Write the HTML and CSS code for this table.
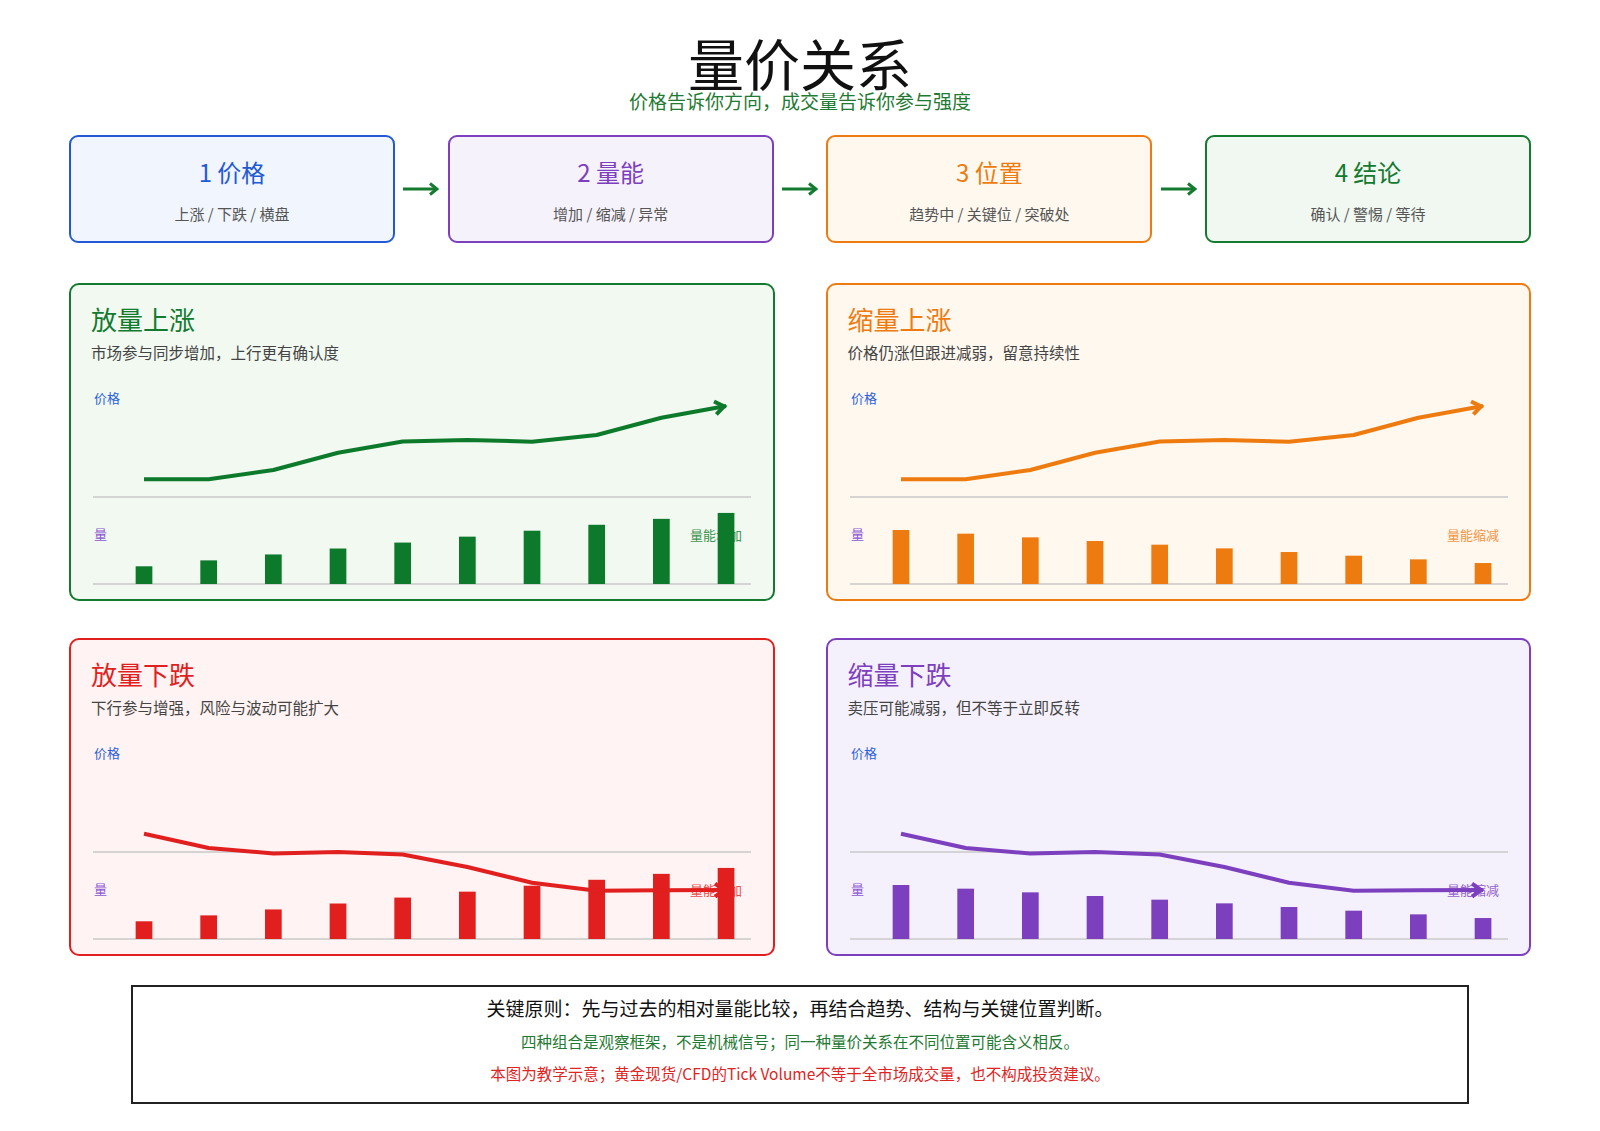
FILE: index.html
```html
<!DOCTYPE html>
<html lang="zh-CN">
<head>
<meta charset="utf-8">
<title>量价关系</title>
<link rel="stylesheet" href="styles.css">
</head>
<body>
<div class="page">
  <header class="hdr">
    <h1 class="title">量价关系</h1>
    <p class="subtitle">价格告诉你方向，成交量告诉你参与强度</p>
  </header>

  <div class="steps">
    <div class="step step-blue">
      <div class="step-title">1 价格</div>
      <div class="step-sub">上涨 / 下跌 / 横盘</div>
    </div>
    <div class="step-arrow"><svg class="arrow-svg" viewBox="0 0 36 14"><line x1="0" y1="7" x2="33" y2="7"/><polyline points="27,1.5 34,7 27,12.5"/></svg></div>
    <div class="step step-purple">
      <div class="step-title">2 量能</div>
      <div class="step-sub">增加 / 缩减 / 异常</div>
    </div>
    <div class="step-arrow"><svg class="arrow-svg" viewBox="0 0 36 14"><line x1="0" y1="7" x2="33" y2="7"/><polyline points="27,1.5 34,7 27,12.5"/></svg></div>
    <div class="step step-orange">
      <div class="step-title">3 位置</div>
      <div class="step-sub">趋势中 / 关键位 / 突破处</div>
    </div>
    <div class="step-arrow"><svg class="arrow-svg" viewBox="0 0 36 14"><line x1="0" y1="7" x2="33" y2="7"/><polyline points="27,1.5 34,7 27,12.5"/></svg></div>
    <div class="step step-green">
      <div class="step-title">4 结论</div>
      <div class="step-sub">确认 / 警惕 / 等待</div>
    </div>
  </div>

  <div class="panels">
    <section class="panel panel-green">
      <h2 class="panel-title">放量上涨</h2>
      <p class="panel-sub">市场参与同步增加，上行更有确认度</p>
      <svg class="chart" viewBox="0 0 661 206">
        <defs><marker id="ah-green" markerUnits="userSpaceOnUse" markerWidth="20" markerHeight="20" viewBox="-16 -10 20 20" refX="0" refY="0" orient="auto"><path class="ah" d="M-11,-6.5 L-2,0 L-11,6.5"/></marker></defs>
        <line class="axis" x1="2" y1="117" x2="660" y2="117"/>
        <line class="axis" x1="2" y1="204" x2="660" y2="204"/>
        <text class="lbl lbl-price" x="3" y="17">价格</text>
        <text class="lbl lbl-vol" x="3" y="153">量</text>
        <text class="lbl lbl-tag" x="599" y="154">量能增加</text>
        <g class="bars">
          <rect x="44.65" y="186.3" width="16.7" height="17.7"/>
          <rect x="109.32" y="180.37" width="16.7" height="23.63"/>
          <rect x="173.99" y="174.44" width="16.7" height="29.56"/>
          <rect x="238.66" y="168.51" width="16.7" height="35.49"/>
          <rect x="303.33" y="162.58" width="16.7" height="41.42"/>
          <rect x="368" y="156.65" width="16.7" height="47.35"/>
          <rect x="432.67" y="150.72" width="16.7" height="53.28"/>
          <rect x="497.34" y="144.79" width="16.7" height="59.21"/>
          <rect x="562.01" y="138.86" width="16.7" height="65.14"/>
          <rect x="626.68" y="132.93" width="16.7" height="71.07"/>
        </g>
        <polyline class="price" marker-end="url(#ah-green)" points="53,99.3 117.67,99.3 182.34,90 247.01,72.7 311.68,61.5 376.35,60 441.02,61.7 505.69,55 570.36,37.7 635.03,26"/>
      </svg>
    </section>

    <section class="panel panel-orange">
      <h2 class="panel-title">缩量上涨</h2>
      <p class="panel-sub">价格仍涨但跟进减弱，留意持续性</p>
      <svg class="chart" viewBox="0 0 661 206">
        <defs><marker id="ah-orange" markerUnits="userSpaceOnUse" markerWidth="20" markerHeight="20" viewBox="-16 -10 20 20" refX="0" refY="0" orient="auto"><path class="ah" d="M-11,-6.5 L-2,0 L-11,6.5"/></marker></defs>
        <line class="axis" x1="2" y1="117" x2="660" y2="117"/>
        <line class="axis" x1="2" y1="204" x2="660" y2="204"/>
        <text class="lbl lbl-price" x="3" y="17">价格</text>
        <text class="lbl lbl-vol" x="3" y="153">量</text>
        <text class="lbl lbl-tag" x="599" y="154">量能缩减</text>
        <g class="bars">
          <rect x="44.65" y="150" width="16.7" height="54"/>
          <rect x="109.32" y="153.67" width="16.7" height="50.33"/>
          <rect x="173.99" y="157.34" width="16.7" height="46.66"/>
          <rect x="238.66" y="161.01" width="16.7" height="42.99"/>
          <rect x="303.33" y="164.68" width="16.7" height="39.32"/>
          <rect x="368" y="168.35" width="16.7" height="35.65"/>
          <rect x="432.67" y="172.02" width="16.7" height="31.98"/>
          <rect x="497.34" y="175.69" width="16.7" height="28.31"/>
          <rect x="562.01" y="179.36" width="16.7" height="24.64"/>
          <rect x="626.68" y="183.03" width="16.7" height="20.97"/>
        </g>
        <polyline class="price" marker-end="url(#ah-orange)" points="53,99.3 117.67,99.3 182.34,90 247.01,72.7 311.68,61.5 376.35,60 441.02,61.7 505.69,55 570.36,37.7 635.03,26"/>
      </svg>
    </section>

    <section class="panel panel-red">
      <h2 class="panel-title">放量下跌</h2>
      <p class="panel-sub">下行参与增强，风险与波动可能扩大</p>
      <svg class="chart" viewBox="0 0 661 206">
        <defs><marker id="ah-red" markerUnits="userSpaceOnUse" markerWidth="20" markerHeight="20" viewBox="-16 -10 20 20" refX="0" refY="0" orient="auto"><path class="ah" d="M-11,-6.5 L-2,0 L-11,6.5"/></marker></defs>
        <line class="axis" x1="2" y1="117" x2="660" y2="117"/>
        <line class="axis" x1="2" y1="204" x2="660" y2="204"/>
        <text class="lbl lbl-price" x="3" y="17">价格</text>
        <text class="lbl lbl-vol" x="3" y="153">量</text>
        <text class="lbl lbl-tag" x="599" y="154">量能增加</text>
        <g class="bars">
          <rect x="44.65" y="186.3" width="16.7" height="17.7"/>
          <rect x="109.32" y="180.37" width="16.7" height="23.63"/>
          <rect x="173.99" y="174.44" width="16.7" height="29.56"/>
          <rect x="238.66" y="168.51" width="16.7" height="35.49"/>
          <rect x="303.33" y="162.58" width="16.7" height="41.42"/>
          <rect x="368" y="156.65" width="16.7" height="47.35"/>
          <rect x="432.67" y="150.72" width="16.7" height="53.28"/>
          <rect x="497.34" y="144.79" width="16.7" height="59.21"/>
          <rect x="562.01" y="138.86" width="16.7" height="65.14"/>
          <rect x="626.68" y="132.93" width="16.7" height="71.07"/>
        </g>
        <polyline class="price" marker-end="url(#ah-red)" points="53,98.7 117.67,113 182.34,118.5 247.01,117 311.68,119.5 376.35,132 441.02,147.8 505.69,155.7 570.36,155.2 635.03,155"/>
      </svg>
    </section>

    <section class="panel panel-purple">
      <h2 class="panel-title">缩量下跌</h2>
      <p class="panel-sub">卖压可能减弱，但不等于立即反转</p>
      <svg class="chart" viewBox="0 0 661 206">
        <defs><marker id="ah-purple" markerUnits="userSpaceOnUse" markerWidth="20" markerHeight="20" viewBox="-16 -10 20 20" refX="0" refY="0" orient="auto"><path class="ah" d="M-11,-6.5 L-2,0 L-11,6.5"/></marker></defs>
        <line class="axis" x1="2" y1="117" x2="660" y2="117"/>
        <line class="axis" x1="2" y1="204" x2="660" y2="204"/>
        <text class="lbl lbl-price" x="3" y="17">价格</text>
        <text class="lbl lbl-vol" x="3" y="153">量</text>
        <text class="lbl lbl-tag" x="599" y="154">量能缩减</text>
        <g class="bars">
          <rect x="44.65" y="150" width="16.7" height="54"/>
          <rect x="109.32" y="153.67" width="16.7" height="50.33"/>
          <rect x="173.99" y="157.34" width="16.7" height="46.66"/>
          <rect x="238.66" y="161.01" width="16.7" height="42.99"/>
          <rect x="303.33" y="164.68" width="16.7" height="39.32"/>
          <rect x="368" y="168.35" width="16.7" height="35.65"/>
          <rect x="432.67" y="172.02" width="16.7" height="31.98"/>
          <rect x="497.34" y="175.69" width="16.7" height="28.31"/>
          <rect x="562.01" y="179.36" width="16.7" height="24.64"/>
          <rect x="626.68" y="183.03" width="16.7" height="20.97"/>
        </g>
        <polyline class="price" marker-end="url(#ah-purple)" points="53,98.7 117.67,113 182.34,118.5 247.01,117 311.68,119.5 376.35,132 441.02,147.8 505.69,155.7 570.36,155.2 635.03,155"/>
      </svg>
    </section>
  </div>

  <div class="note">
    <div class="note-main">关键原则：先与过去的相对量能比较，再结合趋势、结构与关键位置判断。</div>
    <div class="note-green">四种组合是观察框架，不是机械信号；同一种量价关系在不同位置可能含义相反。</div>
    <div class="note-red">本图为教学示意；黄金现货/CFD的Tick Volume不等于全市场成交量，也不构成投资建议。</div>
  </div>
</div>
</body>
</html>
```

FILE: styles.css
```css
body {
  margin: 0;
  background: #ffffff;
  font-family: "Noto Sans CJK SC", "Noto Sans", sans-serif;
  color: #111;
}

.page {
  width: 1462px;
  margin: 0 auto;
  padding-top: 36px;
}

/* header */
.hdr {
  text-align: center;
}
.title {
  margin: 0;
  font-size: 56px;
  line-height: 52px;
  font-weight: 400;
  color: #111;
}
.subtitle {
  margin: 2px 0 0;
  font-size: 19px;
  line-height: 21px;
  color: #1f7a33;
}

/* steps */
.steps {
  display: flex;
  align-items: center;
  margin-top: 24px;
}
.step {
  flex: 0 0 326px;
  height: 108px;
  box-sizing: border-box;
  border: 2px solid;
  border-radius: 9px;
  text-align: center;
  padding-top: 20px;
}
.step-title {
  font-size: 24px;
  line-height: 30px;
}
.step-sub {
  margin-top: 17px;
  font-size: 15px;
  line-height: 20px;
  color: #555;
}
.step-blue { border-color: #2459d6; background: #f1f5fe; color: #2459d6; }
.step-purple { border-color: #7c3fbe; background: #f6f2fc; color: #7c3fbe; }
.step-orange { border-color: #ee7b10; background: #fff8ef; color: #ee7b10; }
.step-green { border-color: #137a2f; background: #f0f8f1; color: #137a2f; }

.step-arrow {
  flex: 1;
  display: flex;
  justify-content: center;
}
.arrow-svg {
  display: block;
  width: 36px;
  height: 14px;
  fill: none;
  stroke: #137a2f;
  stroke-width: 3;
}

/* panels */
.panels {
  display: grid;
  grid-template-columns: 1fr 1fr;
  column-gap: 51px;
  row-gap: 37px;
  margin-top: 40px;
}
.panel {
  box-sizing: border-box;
  height: 318px;
  border: 2px solid;
  border-radius: 10px;
  padding: 17px 20px 10px;
}
.panel-title {
  margin: 0;
  font-size: 26px;
  line-height: 34px;
  font-weight: 400;
}
.panel-sub {
  margin: 5px 0 0;
  font-size: 15.5px;
  line-height: 22px;
  color: #444;
}
.chart {
  display: block;
  margin-top: 17px;
  width: 661px;
  height: 206px;
  overflow: visible;
}
.axis {
  stroke: #c9c9c9;
  stroke-width: 1.5;
}
.lbl {
  font-size: 13px;
  dominant-baseline: central;
}
.lbl-price { fill: #2b5fd9; }
.lbl-vol { fill: #8b57d3; }
.lbl-tag { opacity: 0.8; }
.price {
  fill: none;
  stroke-width: 4;
  stroke-linejoin: round;
}
.ah {
  fill: none;
  stroke-width: 4;
}

.panel-green { border-color: #137a2f; background: #f1f9f1; color: #137a2f; }
.panel-orange { border-color: #ee7b10; background: #fff8ef; color: #ee7b10; }
.panel-red { border-color: #e11f1f; background: #fff3f3; color: #e11f1f; }
.panel-purple { border-color: #7c3fbe; background: #f5f1fc; color: #7c3fbe; }

.panel-green .bars, .panel-green .lbl-tag { fill: #0d7a2b; }
.panel-green .price, .panel-green .ah { stroke: #0d7a2b; }
.panel-orange .bars, .panel-orange .lbl-tag { fill: #ee7b10; }
.panel-orange .price, .panel-orange .ah { stroke: #ee7b10; }
.panel-red .bars, .panel-red .lbl-tag { fill: #e11f1f; }
.panel-red .price, .panel-red .ah { stroke: #e11f1f; }
.panel-purple .bars, .panel-purple .lbl-tag { fill: #7c3fbe; }
.panel-purple .price, .panel-purple .ah { stroke: #7c3fbe; }

/* note */
.note {
  width: 1338px;
  box-sizing: border-box;
  margin: 29px auto 0;
  border: 2px solid #222;
  text-align: center;
  padding: 8px 0 18px;
}
.note-main {
  font-size: 19px;
  line-height: 26px;
  color: #111;
}
.note-green {
  margin-top: 9px;
  font-size: 15.5px;
  line-height: 22px;
  color: #1f7a33;
}
.note-red {
  margin-top: 10px;
  font-size: 15.5px;
  line-height: 22px;
  color: #e02424;
}
```
